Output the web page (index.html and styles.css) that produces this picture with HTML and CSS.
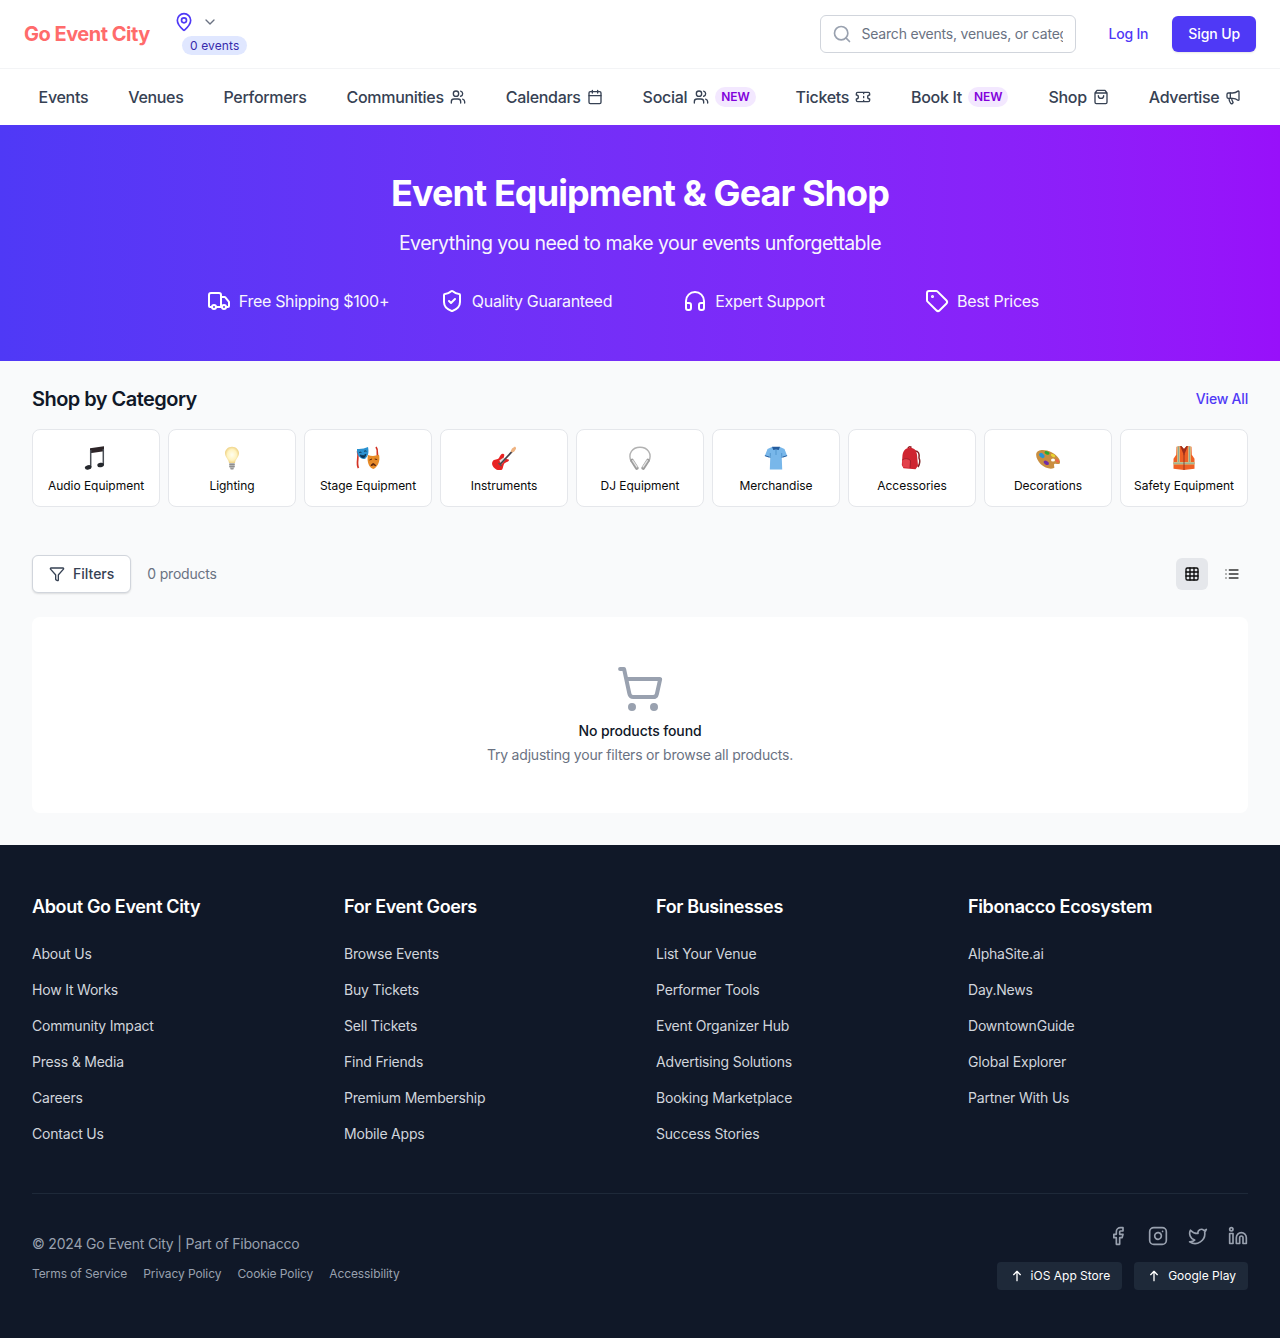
FILE: index.html
```html
<!DOCTYPE html>
<html lang="en">
<head>
<meta charset="utf-8">
<title>Event Equipment &amp; Gear Shop - Go Event City</title>
<link rel="stylesheet" href="styles.css">
</head>
<body>
<svg class="sprite" aria-hidden="true">
  <symbol id="users" viewBox="0 0 24 24"><path d="M16 21v-2a4 4 0 0 0-4-4H6a4 4 0 0 0-4 4v2"/><circle cx="9" cy="7" r="4"/><path d="M22 21v-2a4 4 0 0 0-3-3.87"/><path d="M16 3.13a4 4 0 0 1 0 7.75"/></symbol>
  <symbol id="arrow-up" viewBox="0 0 24 24"><path d="m7 10 5-5 5 5M12 19V5"/></symbol>
</svg>

<header class="header">
  <div class="topbar">
    <a class="logo">Go Event City</a>
    <div class="location">
      <div class="location-row">
        <svg class="icon pin" viewBox="0 0 24 24"><path d="M20 10c0 4.993-5.539 10.193-7.399 11.799a1 1 0 0 1-1.202 0C9.539 20.193 4 14.993 4 10a8 8 0 0 1 16 0"/><circle cx="12" cy="10" r="3"/></svg>
        <svg class="icon chevron" viewBox="0 0 24 24"><path d="m6 9 6 6 6-6"/></svg>
      </div>
      <span class="count">0 events</span>
    </div>
    <div class="search">
      <svg class="icon" viewBox="0 0 24 24"><circle cx="11" cy="11" r="8"/><path d="m21 21-4.3-4.3"/></svg>
      <input type="text" placeholder="Search events, venues, or categories">
    </div>
    <a class="login">Log In</a>
    <a class="signup">Sign Up</a>
  </div>
  <nav class="nav">
    <a>Events</a>
    <a>Venues</a>
    <a>Performers</a>
    <a>Communities <svg class="icon"><use href="#users"/></svg></a>
    <a>Calendars <svg class="icon" viewBox="0 0 24 24"><path d="M8 2v4M16 2v4M3 10h18"/><rect x="3" y="4" width="18" height="18" rx="2"/></svg></a>
    <a>Social <svg class="icon"><use href="#users"/></svg><b class="new">NEW</b></a>
    <a>Tickets <svg class="icon" viewBox="0 0 24 24"><path d="M2 9a3 3 0 0 1 0 6v2a2 2 0 0 0 2 2h16a2 2 0 0 0 2-2v-2a3 3 0 0 1 0-6V7a2 2 0 0 0-2-2H4a2 2 0 0 0-2 2ZM13 5v2M13 17v2M13 11v2"/></svg></a>
    <a>Book It <b class="new">NEW</b></a>
    <a>Shop <svg class="icon" viewBox="0 0 24 24"><path d="M6 2 3 6v14a2 2 0 0 0 2 2h14a2 2 0 0 0 2-2V6l-3-4ZM3 6h18M16 10a4 4 0 0 1-8 0"/></svg></a>
    <a>Advertise <svg class="icon" viewBox="0 0 24 24"><path d="M11 6a13 13 0 0 0 8.400-2.800A1 1 0 0 1 21 4v12a1 1 0 0 1-1.600.8A13 13 0 0 0 11 14H5a2 2 0 0 1-2-2V8a2 2 0 0 1 2-2z"/><path d="M6 14a12 12 0 0 0 2.400 7.200 2 2 0 0 0 3.200-2.400A8 8 0 0 1 10 14M8 6v8"/></svg></a>
  </nav>
</header>

<section class="hero">
  <h1>Event Equipment &amp; Gear Shop</h1>
  <p>Everything you need to make your events unforgettable</p>
  <ul class="perks">
    <li><svg class="icon" viewBox="0 0 24 24"><path d="M14 18V6a2 2 0 0 0-2-2H4a2 2 0 0 0-2 2v11a1 1 0 0 0 1 1h2M15 18H9M19 18h2a1 1 0 0 0 1-1v-3.65a1 1 0 0 0-.22-.624l-3.48-4.35A1 1 0 0 0 17.52 8H14"/><circle cx="17" cy="18" r="2"/><circle cx="7" cy="18" r="2"/></svg><span>Free Shipping $100+</span></li>
    <li><svg class="icon" viewBox="0 0 24 24"><path d="M20 13c0 5-3.5 7.5-7.66 8.95a1 1 0 0 1-.67-.01C7.5 20.5 4 18 4 13V6a1 1 0 0 1 1-1c2 0 4.5-1.2 6.24-2.72a1.17 1.17 0 0 1 1.52 0C14.51 3.81 17 5 19 5a1 1 0 0 1 1 1z"/><path d="m9 12 2 2 4-4"/></svg><span>Quality Guaranteed</span></li>
    <li><svg class="icon" viewBox="0 0 24 24"><path d="M3 14h3a2 2 0 0 1 2 2v3a2 2 0 0 1-2 2H5a2 2 0 0 1-2-2v-7a9 9 0 0 1 18 0v7a2 2 0 0 1-2 2h-1a2 2 0 0 1-2-2v-3a2 2 0 0 1 2-2h3"/></svg><span>Expert Support</span></li>
    <li><svg class="icon" viewBox="0 0 24 24"><path d="M12.586 2.586A2 2 0 0 0 11.172 2H4a2 2 0 0 0-2 2v7.172a2 2 0 0 0 .586 1.414l8.704 8.704a2.426 2.426 0 0 0 3.42 0l6.58-6.58a2.426 2.426 0 0 0 0-3.42z"/><circle cx="7.5" cy="7.5" r=".5" fill="currentColor"/></svg><span>Best Prices</span></li>
  </ul>
</section>

<main class="main">
  <div class="section-head">
    <h2>Shop by Category</h2>
    <a>View All</a>
  </div>
  <div class="categories">
    <a><svg class="emoji" viewBox="0 0 24 24"><path d="M6 2.200 20 .3v5L6 7.200z" fill="#2d2528"/><path d="M6.700 4v17M19.300 3v15.500" stroke="#4b4f56" stroke-width="1.500" fill="none"/><ellipse cx="4.200" cy="21.400" rx="3.400" ry="2.200" transform="rotate(-12 4.200 21.400)" fill="#25282d"/><ellipse cx="16.700" cy="19" rx="3.400" ry="2.200" transform="rotate(-12 16.700 19)" fill="#25282d"/></svg><span>Audio Equipment</span></a>
    <a><svg class="emoji" viewBox="0 0 24 24"><defs><radialGradient id="glow"><stop offset="0" stop-color="#fffef0"/><stop offset=".65" stop-color="#fff3c0"/><stop offset="1" stop-color="#efd388"/></radialGradient></defs><path d="M12 .7c-4 0-7 2.900-7 6.600 0 3.800 3.500 5.700 4 9.700h6c.5-4 4-5.900 4-9.700C19 3.600 16 .7 12 .7z" fill="url(#glow)"/><path d="M9.300 17h5.400v4l-1.400 2.500h-2.600L9.300 21z" fill="#b5b5b5"/><path d="M9.300 18.500h5.400M9.300 20.500h5.400M10.700 22.800h2.600" stroke="#7c7c7c" stroke-width=".7"/></svg><span>Lighting</span></a>
    <a><svg class="emoji" viewBox="0 0 24 24"><path d="M1.500 5C3.500 11-.4 17 2.500 22M20 1c3.300 4-.4 8 2.400 13" fill="none" stroke="#d33324" stroke-width="1.700"/><path d="M1 3Q7 3.500 12 1c1 5 .6 9-3 12C4 13.500.600 9 1 3z" fill="#2a91d0"/><path d="M3 6.600q1.500-1 2.500 0M8 5.300q1.500-1 2.500 0M4 9q3.500 1.800 6-.8-.6 3.300-2.800 3.700Q5 11.800 4 9z" stroke="#0d3453" stroke-width=".8" fill="#0d3453"/><path d="M12 9q5 2 11-.2c1.400 6-1 12-5.500 14.200C13 22 10.500 15.500 12 9z" fill="#e78b28"/><path d="m13.500 14 2.500-1m2.700 0 2.500.6m-6.200 6q2.200-4 4.700 0-2-1.500-4.700 0z" stroke="#5c250c" fill="#5c250c"/></svg><span>Stage Equipment</span></a>
    <a><svg class="emoji" viewBox="0 0 24 24"><path d="M.6 15.500c1.500-2.700 5.200-1.400 6.500-3.700s2.200-4.600 4.500-3.800c1.900.8-.6 2.800.6 4.200 1.300 1.500 4.200.2 4.700 1.700.7 2.400-3.900 1.900-5.100 4.500s-.4 5.700-3.700 5.900C3.400 24.500-1.600 19 .6 15.500z" fill="#e82222"/><path d="m7.300 14.500 4.300-3 2 2-4.200 5z" fill="#ddd"/><path d="m8 18.500 13-14" stroke="#454148" stroke-width="1.800"/><path d="m20 2.500 3-2 1.300 1.600-2 3.500-2.500 1-1-1.500z" fill="#efb381"/><path d="m6.500 17 3 3" stroke="#555" stroke-width="1.200"/></svg><span>Instruments</span></a>
    <a><svg class="emoji" viewBox="0 0 24 24"><path d="M3.200 15.500C-.5 7.500 4.500 1.200 12 1.200s12.500 6.300 8.800 14.300" fill="none" stroke="#b2b2b2" stroke-width="1.400"/><path d="m4 14.500 4.800 7.500M20 14.500 15.200 22" stroke="#9d9d9d" stroke-width="3.600" stroke-linecap="round"/><path d="m4.400 14.100 4.800 7.300M19.600 14.100l-4.800 7.300" stroke="#e4e4e4" stroke-width="1.300"/></svg><span>DJ Equipment</span></a>
    <a><svg class="emoji" viewBox="0 0 24 24"><path d="M8 1 3.500 3 .8 10l4.700 1.300.8-1.300-.5 13.500h12.400L17.700 10l.8 1.300 4.700-1.300-2.700-7L16 1z" fill="#78b7ea"/><path d="m1 9.200 4.800 1.500-.3 1L.7 10zm22 0-4.800 1.500.3 1 4.800-1.700zM8 .7h8L14.700 4 12 3.400 9.300 4z" fill="#245b9d"/><path d="M12 3.500V9M6.300 7v5M17.700 7v5" stroke="#4a8fc9" stroke-width=".8"/></svg><span>Merchandise</span></a>
    <a><svg class="emoji" viewBox="0 0 24 24"><path d="M15 5q5 0 4 7 2 4-1 9" fill="none" stroke="#822326" stroke-width="1.500"/><path d="M8 2q1-2 3.500-.5" fill="none" stroke="#8d1016" stroke-width="1.500"/><path d="M2.500 9c1-5 4-7.500 8-7.200 4 .3 6 3 6.500 7l1 11-2.500 3.500-12-1L1.800 19z" fill="#cf2430"/><path d="M2 14q4-3 8.500.5L10 22l-7-1z" fill="#e3414b"/><path d="M2.200 14q4-3 8.300.5L10 22" fill="none" stroke="#961721" stroke-width=".8"/></svg><span>Accessories</span></a>
    <a><svg class="emoji" viewBox="0 0 24 24"><path d="M.2 8C1 3 9 2.800 15.500 6.200c6 3 9.500 8 8.300 11-1 2.300-4.300-.7-5.600 1-.8 1.200 1.300 3.800-.8 4-3.400 1.500-9-.7-12.600-3.900C1.800 15.200-.200 11.300.2 8z" fill="#c98e40"/><ellipse cx="17" cy="14" rx="2" ry="1.500" fill="#fff"/><ellipse cx="5.800" cy="9.500" rx="3" ry="2.100" transform="rotate(40 5.800 9.500)" fill="#2793d6"/><ellipse cx="11" cy="6.900" rx="2.600" ry="1.600" transform="rotate(20 11 6.900)" fill="#2ca830"/><ellipse cx="17" cy="9.500" rx="2.400" ry="1.300" transform="rotate(30 17 9.500)" fill="#e9d430"/><ellipse cx="21.300" cy="14.800" rx="2.200" ry="1.200" transform="rotate(45 21.300 14.800)" fill="#f06249"/><ellipse cx="10.300" cy="16.800" rx="2.900" ry="1.900" transform="rotate(30 10.300 16.800)" fill="#6f2da8"/></svg><span>Decorations</span></a>
    <a><svg class="emoji" viewBox="0 0 24 24"><path d="M4.500.7 9 0l3 3 3-3 4.500.7.300 8 2.700 4v10L12 24 1.500 22.700v-10l2.700-4z" fill="#ef6025"/><path d="M8.200 0 12 9.500 15.800 0l-1.300 0L12 3 9.500 0z" fill="#9d2d1b"/><path d="M6.500.5V16M17.500.5V16M1.500 17.200h21" stroke="#d2c98a" stroke-width="2.600"/><path d="M6.500.5V16M17.500.5V16M1.500 17.200h21" stroke="#85a39a" stroke-width=".9"/><path d="M12 8v16" stroke="#852a1a" stroke-width=".8"/></svg><span>Safety Equipment</span></a>
  </div>

  <div class="toolbar">
    <button class="filters"><svg class="icon" viewBox="0 0 24 24"><path d="M10 20a1 1 0 0 0 .553.895l2 1A1 1 0 0 0 14 21v-7a2 2 0 0 1 .517-1.341L21.740 4.670A1 1 0 0 0 21 3H3a1 1 0 0 0-.742 1.670l7.225 7.989A2 2 0 0 1 10 14z"/></svg>Filters</button>
    <span class="total">0 products</span>
    <div class="views">
      <button class="view active"><svg class="icon" viewBox="0 0 24 24"><rect x="3" y="3" width="18" height="18" rx="2"/><path d="M3 9h18M3 15h18M9 3v18M15 3v18"/></svg></button>
      <button class="view"><svg class="icon" viewBox="0 0 24 24"><path d="M3 12h.01M3 18h.01M3 6h.01M8 12h13M8 18h13M8 6h13"/></svg></button>
    </div>
  </div>

  <div class="empty">
    <svg class="icon" viewBox="0 0 24 24"><circle cx="8" cy="21" r="1"/><circle cx="19" cy="21" r="1"/><path d="M2.050 2.050h2l2.660 12.420a2 2 0 0 0 2 1.580h9.780a2 2 0 0 0 1.950-1.570l1.650-7.430H5.120"/></svg>
    <h3>No products found</h3>
    <p>Try adjusting your filters or browse all products.</p>
  </div>
</main>

<footer class="footer">
  <div class="columns">
    <div><h3>About Go Event City</h3><ul><li>About Us</li><li>How It Works</li><li>Community Impact</li><li>Press &amp; Media</li><li>Careers</li><li>Contact Us</li></ul></div>
    <div><h3>For Event Goers</h3><ul><li>Browse Events</li><li>Buy Tickets</li><li>Sell Tickets</li><li>Find Friends</li><li>Premium Membership</li><li>Mobile Apps</li></ul></div>
    <div><h3>For Businesses</h3><ul><li>List Your Venue</li><li>Performer Tools</li><li>Event Organizer Hub</li><li>Advertising Solutions</li><li>Booking Marketplace</li><li>Success Stories</li></ul></div>
    <div><h3>Fibonacco Ecosystem</h3><ul><li>AlphaSite.ai</li><li>Day.News</li><li>DowntownGuide</li><li>Global Explorer</li><li>Partner With Us</li></ul></div>
  </div>
  <div class="bottom">
    <div class="legal">
      <p>© 2024 Go Event City | Part of Fibonacco</p>
      <div class="legal-links"><a>Terms of Service</a><a>Privacy Policy</a><a>Cookie Policy</a><a>Accessibility</a></div>
    </div>
    <div class="connect">
      <div class="social">
        <svg class="icon" viewBox="0 0 24 24"><path d="M18 2h-3a5 5 0 0 0-5 5v3H7v4h3v8h4v-8h3l1-4h-4V7a1 1 0 0 1 1-1h3z"/></svg>
        <svg class="icon" viewBox="0 0 24 24"><rect x="2" y="2" width="20" height="20" rx="5"/><path d="M16 11.370A4 4 0 1 1 12.630 8 4 4 0 0 1 16 11.370zM17.500 6.500h.01"/></svg>
        <svg class="icon" viewBox="0 0 24 24"><path d="M22 4s-.7 2.100-2 3.400c1.600 10-9.400 17.300-18 11.600 2.200.1 4.400-.6 6-2C3 15.500.500 9.600 3 5c2.200 2.600 5.600 4.100 9 4-.9-4.200 4-6.600 7-3.800 1.100 0 3-1.200 3-1.200z"/></svg>
        <svg class="icon" viewBox="0 0 24 24"><path d="M16 8a6 6 0 0 1 6 6v7h-4v-7a2 2 0 0 0-4 0v7h-4v-7a6 6 0 0 1 6-6z"/><rect x="2" y="9" width="4" height="12"/><circle cx="4" cy="4" r="2"/></svg>
      </div>
      <div class="stores">
        <a><svg class="icon"><use href="#arrow-up"/></svg>iOS App Store</a>
        <a><svg class="icon"><use href="#arrow-up"/></svg>Google Play</a>
      </div>
    </div>
  </div>
</footer>
</body>
</html>
```
FILE: styles.css
```css
* { box-sizing: border-box; margin: 0; padding: 0; }
body { font: 14px/20px Inter, sans-serif; letter-spacing: -.2px; color: #0a0a0a; background: #f9fafb; }
ul { list-style: none; }
button, input { font: inherit; letter-spacing: inherit; border: 0; background: none; }
.sprite { display: none; }
.icon { width: 16px; height: 16px; flex: none; fill: none; stroke: currentColor; stroke-width: 2; stroke-linecap: round; stroke-linejoin: round; }

.header { background: #fff; }
.topbar { display: flex; align-items: center; height: 69px; padding: 0 24px; border-bottom: 1px solid #f3f4f6; }
.logo { width: 126px; font-size: 20px; line-height: 28px; font-weight: 700; letter-spacing: -.5px; color: #ff6b6b; white-space: nowrap; }
.location { margin-left: 24px; }
.location-row { display: flex; align-items: center; gap: 8px; height: 24px; }
.pin { width: 20px; height: 20px; color: #4f39f6; }
.chevron { color: #6a7282; }
.count { display: block; margin: 2px 0 4px 8px; padding: 2px 8px 1px; border-radius: 10px; background: #e0e7ff; color: #372aac; font-size: 12px; line-height: 16px; letter-spacing: .12px; }
.search { display: flex; align-items: center; gap: 9px; width: 256px; height: 38px; margin-left: auto; padding: 0 12px 0 11px; border: 1px solid #d1d5dc; border-radius: 6px; }
.search .icon { width: 20px; height: 20px; color: #99a1af; }
.search input { flex: 1; min-width: 0; height: 20px; outline: 0; }
.search input::placeholder { color: #6a7282; opacity: 1; }
.login { margin-left: 32px; font-weight: 500; }
.login, .section-head a { color: #4f39f6; }
.signup { margin-left: 24px; padding: 8px 16px; border-radius: 6px; background: #4f39f6; color: #fff; font-weight: 500; letter-spacing: -.1px; box-shadow: 0 1px 2px rgba(0, 0, 0, .1); }
.nav { display: flex; align-items: center; justify-content: center; gap: 40px; height: 56px; font-size: 16px; line-height: 24px; font-weight: 500; letter-spacing: -.31px; color: #364153; white-space: nowrap; }
.nav a { display: flex; align-items: center; gap: 6px; }
.new { padding: 2px 6px; border-radius: 10px; background: #f3e8ff; color: #8200db; font-size: 12px; line-height: 16px; font-weight: 600; letter-spacing: -.05px; }

.hero { padding: 48px 192px; text-align: center; color: #fff; background: linear-gradient(to right in oklab, #4f39f6, #9810fa); }
.hero h1 { font-size: 36px; line-height: 40px; font-weight: 700; letter-spacing: -.91px; }
.hero p { margin: 16px 0 32px; font-size: 19.5px; line-height: 28px; letter-spacing: -.52px; opacity: .95; }
.perks { display: grid; grid-template-columns: repeat(4, 1fr); gap: 16px; font-size: 16px; line-height: 24px; letter-spacing: -.31px; }
.perks li { display: flex; justify-content: center; gap: 8px; white-space: nowrap; }
.perks .icon { width: 24px; height: 24px; }
.perks span { opacity: .95; }

.main { padding: 24px 32px 32px; }
.section-head { display: flex; align-items: center; justify-content: space-between; margin-bottom: 16px; }
.section-head h2 { font-size: 20px; line-height: 28px; font-weight: 600; letter-spacing: -.54px; color: #101828; }
.section-head a { font-weight: 500; }
.categories { display: grid; grid-template-columns: repeat(9, 1fr); gap: 8px; }
.categories a { display: flex; flex-direction: column; align-items: center; height: 78px; padding-top: 16px; border: 1px solid #e5e7eb; border-radius: 8px; background: #fff; font-size: 12px; line-height: 16px; letter-spacing: -.03px; white-space: nowrap; }
.emoji { width: 24px; height: 24px; margin-bottom: 8px; }
.toolbar { display: flex; align-items: center; margin: 48px 0 24px; }
.filters { display: flex; align-items: center; gap: 8px; height: 38px; padding: 0 16px; border: 1px solid #d1d5dc; border-radius: 6px; background: #fff; color: #364153; font-weight: 500; letter-spacing: 0; box-shadow: 0 1px 2px rgba(0, 0, 0, .12); }
.total { margin-left: 16px; color: #6a7282; }
.views { display: flex; gap: 8px; margin-left: auto; }
.view { display: grid; place-items: center; width: 32px; height: 32px; border-radius: 6px; color: #333; }
.view.active { background: #e5e7eb; color: #0a0a0a; }
.empty { display: flex; flex-direction: column; align-items: center; height: 196px; padding-top: 48px; border-radius: 8px; background: #fff; }
.empty .icon { width: 48px; height: 48px; color: #99a1af; }
.empty h3 { margin: 8px 0 4px; font-size: 14px; font-weight: 500; letter-spacing: -.12px; color: #101828; }
.empty p { color: #6a7282; }

.footer { padding: 48px 32px; background: #101828; color: #d1d5dc; }
.columns { display: grid; grid-template-columns: repeat(4, 1fr); gap: 32px; }
.columns h3 { margin-bottom: 23px; font-size: 18px; line-height: 28px; font-weight: 600; letter-spacing: -.37px; color: #fff; }
.columns ul { display: flex; flex-direction: column; gap: 16px; }
.bottom { display: flex; align-items: center; justify-content: space-between; margin-top: 49px; padding-top: 32px; border-top: 1px solid #1e2939; color: #99a1af; }
.legal-links { display: flex; gap: 16px; margin-top: 12px; font-size: 12px; line-height: 16px; letter-spacing: -.09px; }
.connect { display: flex; flex-direction: column; align-items: flex-end; gap: 16px; }
.social { display: flex; gap: 20px; }
.social .icon { width: 20px; height: 20px; }
.stores { display: flex; gap: 12px; }
.stores a { display: flex; align-items: center; gap: 6px; height: 28px; padding: 0 12px; border-radius: 4px; background: #1e2939; color: #fff; font-size: 12px; line-height: 16px; letter-spacing: 0; }
```
